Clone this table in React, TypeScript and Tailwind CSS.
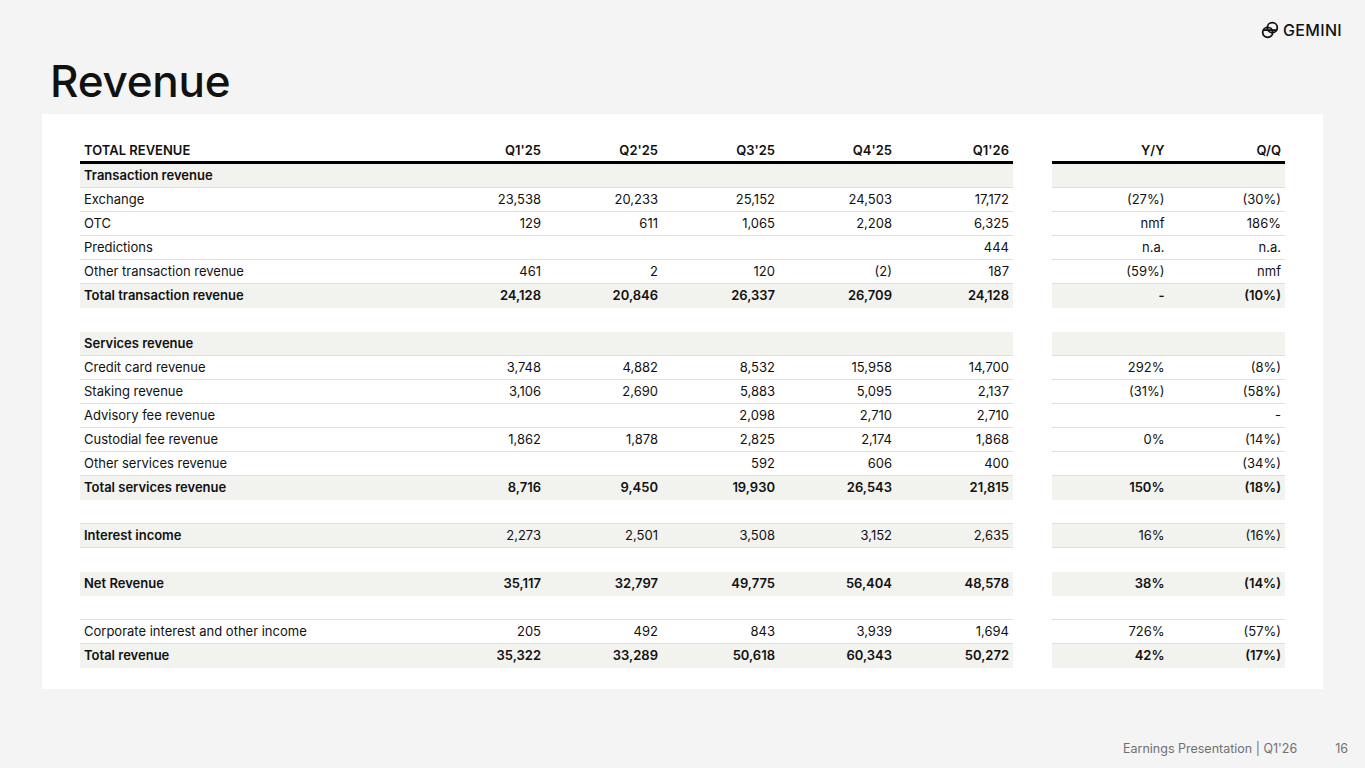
type Row = {
  label: string;
  q: string[];
  yy?: string;
  qq?: string;
  kind?: "section" | "total" | "blank" | "plain";
  line?: boolean;
  lightValues?: boolean;
};

const rows: Row[] = [
  { label: "Transaction revenue", q: [], kind: "section", line: true },
  { label: "Exchange", q: ["23,538", "20,233", "25,152", "24,503", "17,172"], yy: "(27%)", qq: "(30%)", line: true },
  { label: "OTC", q: ["129", "611", "1,065", "2,208", "6,325"], yy: "nmf", qq: "186%", line: true },
  { label: "Predictions", q: ["", "", "", "", "444"], yy: "n.a.", qq: "n.a.", line: true },
  { label: "Other transaction revenue", q: ["461", "2", "120", "(2)", "187"], yy: "(59%)", qq: "nmf", line: true },
  { label: "Total transaction revenue", q: ["24,128", "20,846", "26,337", "26,709", "24,128"], yy: "-", qq: "(10%)", kind: "total" },
  { label: "", q: [], kind: "blank" },
  { label: "Services revenue", q: [], kind: "section", line: true },
  { label: "Credit card revenue", q: ["3,748", "4,882", "8,532", "15,958", "14,700"], yy: "292%", qq: "(8%)", line: true },
  { label: "Staking revenue", q: ["3,106", "2,690", "5,883", "5,095", "2,137"], yy: "(31%)", qq: "(58%)", line: true },
  { label: "Advisory fee revenue", q: ["", "", "2,098", "2,710", "2,710"], yy: "", qq: "-", line: true },
  { label: "Custodial fee revenue", q: ["1,862", "1,878", "2,825", "2,174", "1,868"], yy: "0%", qq: "(14%)", line: true },
  { label: "Other services revenue", q: ["", "", "592", "606", "400"], yy: "", qq: "(34%)", line: true },
  { label: "Total services revenue", q: ["8,716", "9,450", "19,930", "26,543", "21,815"], yy: "150%", qq: "(18%)", kind: "total" },
  { label: "", q: [], kind: "blank", line: true },
  { label: "Interest income", q: ["2,273", "2,501", "3,508", "3,152", "2,635"], yy: "16%", qq: "(16%)", kind: "section", line: true, lightValues: true },
  { label: "", q: [], kind: "blank" },
  { label: "Net Revenue", q: ["35,117", "32,797", "49,775", "56,404", "48,578"], yy: "38%", qq: "(14%)", kind: "total" },
  { label: "", q: [], kind: "blank", line: true },
  { label: "Corporate interest and other income", q: ["205", "492", "843", "3,939", "1,694"], yy: "726%", qq: "(57%)", line: true },
  { label: "Total revenue", q: ["35,322", "33,289", "50,618", "60,343", "50,272"], yy: "42%", qq: "(17%)", kind: "total" },
];

const quarters = ["Q1'25", "Q2'25", "Q3'25", "Q4'25", "Q1'26"];

const GeminiMark = () => (
  <svg width="18" height="18" viewBox="0 0 18 18" fill="none" stroke="#111" strokeWidth="1.8">
    <circle cx="11.3" cy="6.7" r="5" />
    <circle cx="6.7" cy="11.3" r="5" />
    <path d="M2.2 9.1h13.6" />
  </svg>
);

const rowClass = (r: Row) => {
  const bg = r.kind === "section" || r.kind === "total" ? "bg-[#f2f2ee]" : "bg-white";
  const border = r.line ? "border-b border-[#e0e0db]" : "";
  return `${bg} ${border} h-[24px] items-center`;
};

const labelWeight = (r: Row) =>
  r.kind === "section" || r.kind === "total" ? "font-semibold" : "font-normal";

const valueWeight = (r: Row) =>
  r.lightValues ? "font-normal" : labelWeight(r);

const App = () => {
  return (
    <div
      className="w-[1365px] h-[768px] bg-[#f4f4f4] flex flex-col text-[#111] overflow-hidden"
      style={{ fontFamily: "Inter, 'Liberation Sans', sans-serif" }}
    >
      <header className="h-[114px] shrink-0 flex flex-col">
        <div className="mt-[20px] h-[20px] flex justify-end items-center gap-[4px] pr-[23px]">
          <GeminiMark />
          <span className="text-[16px] font-medium tracking-[0.02em] leading-none">GEMINI</span>
        </div>
        <h1 className="mt-[19px] ml-[50px] text-[44px] font-medium tracking-[-0.005em] leading-[44px]">
          Revenue
        </h1>
      </header>

      <section className="ml-[42px] w-[1281px] h-[575px] shrink-0 bg-white pt-[23px] px-[38px] flex gap-[39px] text-[13px]">
        <div className="w-[933px] flex flex-col">
          <div className="grid grid-cols-[1fr_repeat(5,117px)] h-[27px] border-b-[3px] border-black font-semibold items-end pb-[1px]">
            <div className="px-1">TOTAL REVENUE</div>
            {quarters.map((q) => (
              <div key={q} className="px-1 text-right">
                {q}
              </div>
            ))}
          </div>
          {rows.map((r, i) => (
            <div key={i} className={`grid grid-cols-[1fr_repeat(5,117px)] ${rowClass(r)}`}>
              <div className={`px-1 ${labelWeight(r)}`}>{r.label}</div>
              {[0, 1, 2, 3, 4].map((j) => (
                <div key={j} className={`px-1 text-right ${valueWeight(r)}`}>
                  {r.q[j] ?? ""}
                </div>
              ))}
            </div>
          ))}
        </div>

        <div className="w-[233px] flex flex-col">
          <div className="grid grid-cols-2 h-[27px] border-b-[3px] border-black font-semibold items-end pb-[1px]">
            <div className="px-1 text-right">Y/Y</div>
            <div className="px-1 text-right">Q/Q</div>
          </div>
          {rows.map((r, i) => (
            <div key={i} className={`grid grid-cols-2 ${rowClass(r)}`}>
              <div className={`px-1 text-right ${valueWeight(r)}`}>{r.yy ?? ""}</div>
              <div className={`px-1 text-right ${valueWeight(r)}`}>{r.qq ?? ""}</div>
            </div>
          ))}
        </div>
      </section>

      <footer className="flex-1 flex justify-end items-end gap-[38px] pr-[17px] pb-[9px] text-[12.5px] text-[#707070]">
        <span>Earnings Presentation | Q1'26</span>
        <span>16</span>
      </footer>
    </div>
  );
};

export default App;
